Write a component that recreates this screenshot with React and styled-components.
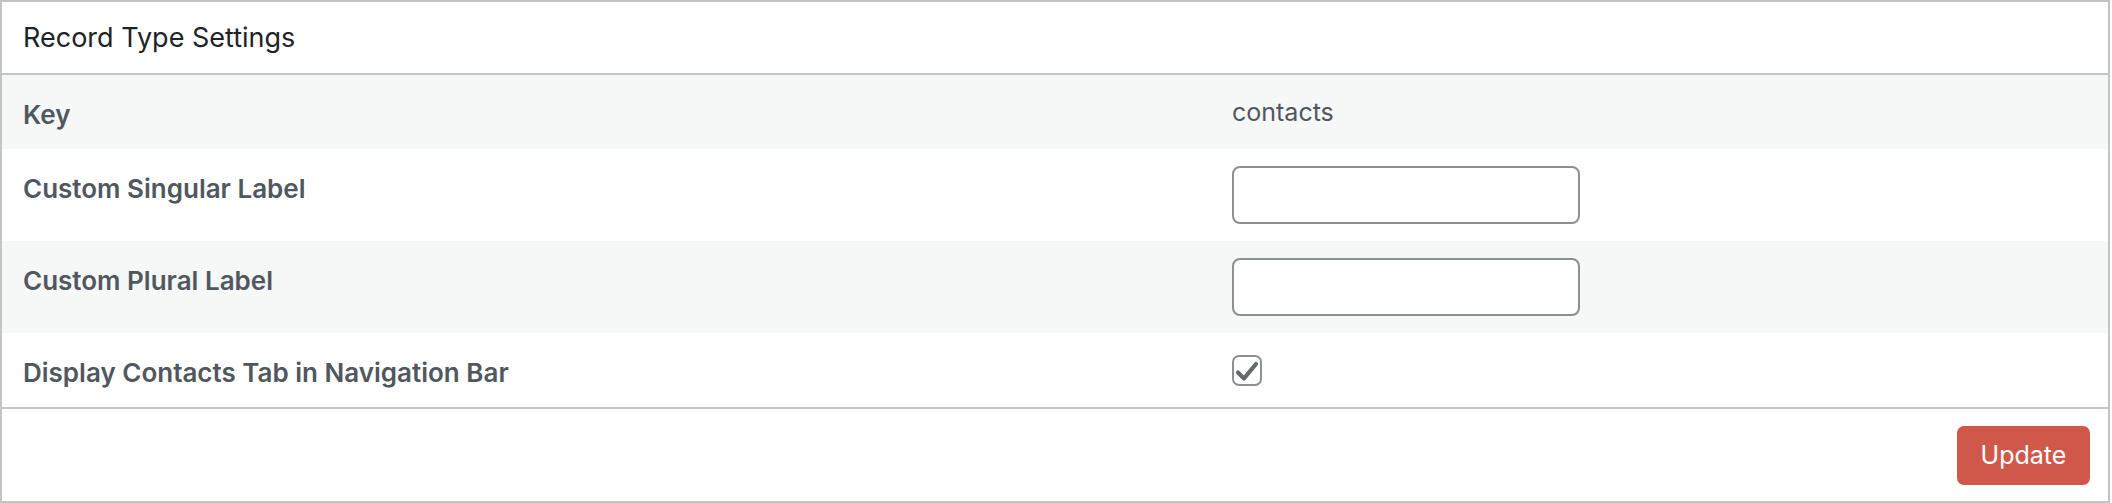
import React from 'react';
import styled, { createGlobalStyle } from 'styled-components';

const GlobalStyle = createGlobalStyle`
    body {
        margin: 0;
        background: #ffffff;
        font-family: Inter, "Noto Sans", "Liberation Sans", sans-serif;
    }
`;

const rows = [
    { label: 'Key', kind: 'text', value: 'contacts' },
    { label: 'Custom Singular Label', kind: 'input' },
    { label: 'Custom Plural Label', kind: 'input' },
    { label: 'Display Contacts Tab in Navigation Bar', kind: 'checkbox' },
];

function CheckIcon() {
    return (
        <svg width='26' height='26' viewBox='0 0 26 26'>
            <path
                d='M4 14.5 L10 20.5 L22 6'
                fill='none'
                stroke='#646970'
                strokeWidth='4.2'
                strokeLinecap='round'
                strokeLinejoin='round'
            />
        </svg>
    );
}

function App() {
    return (
        <>
            <GlobalStyle />
            <Box>
                <Header>Record Type Settings</Header>
                <Table>
                    {rows.map((r, i) => (
                        <Row key={i} striped={i % 2 === 0}>
                            <Label>{r.label}</Label>
                            {r.kind === 'text' && <ValueText>{r.value}</ValueText>}
                            {r.kind === 'input' && (
                                <InputCell>
                                    <TextInput type='text' />
                                </InputCell>
                            )}
                            {r.kind === 'checkbox' && (
                                <CheckCell>
                                    <Checkbox>
                                        <CheckIcon />
                                    </Checkbox>
                                </CheckCell>
                            )}
                        </Row>
                    ))}
                </Table>
                <Footer>
                    <UpdateButton>Update</UpdateButton>
                </Footer>
            </Box>
        </>
    );
}

export default App;

const Box = styled.div`
    width: 2110px;
    box-sizing: border-box;
    border: 2px solid #c3c4c7;
    background: #ffffff;
`;

const Header = styled.div`
    height: 73px;
    box-sizing: border-box;
    padding: 0 21px;
    display: flex;
    align-items: center;
    font-size: 27px;
    color: #1d2327;
    border-bottom: 2px solid #c3c4c7;
`;

const Table = styled.div`
    display: flex;
    flex-direction: column;
`;

const Row = styled.div`
    display: grid;
    grid-template-columns: 1209px 1fr;
    align-items: start;
    padding-left: 21px;
    background: ${(props) => (props.striped ? '#f6f7f7' : '#ffffff')};
`;

const Label = styled.div`
    padding: 23px 0 17px;
    font-size: 26px;
    line-height: 34px;
    font-weight: 600;
    color: #50575e;
`;

const ValueText = styled.div`
    padding: 20px 0 18px;
    font-size: 25px;
    line-height: 34px;
    color: #50575e;
`;

const InputCell = styled.div`
    padding: 17px 0;
`;

const TextInput = styled.input`
    display: block;
    width: 348px;
    height: 58px;
    box-sizing: border-box;
    border: 2px solid #8c8f94;
    border-radius: 8px;
    background: #ffffff;
    outline: none;
`;

const CheckCell = styled.div`
    padding: 22px 0 21px;
`;

const Checkbox = styled.div`
    width: 30px;
    height: 31px;
    box-sizing: border-box;
    border: 2px solid #8c8f94;
    border-radius: 7px;
    background: #ffffff;
    display: flex;
    align-items: center;
    justify-content: center;
`;

const Footer = styled.div`
    height: 94px;
    box-sizing: border-box;
    border-top: 2px solid #c3c4c7;
    display: flex;
    align-items: center;
    justify-content: flex-end;
    padding: 0 18px;
`;

const UpdateButton = styled.button`
    height: 59px;
    padding: 0 23px;
    min-width: 133px;
    border: none;
    border-radius: 7px;
    background: #d0584b;
    color: #ffffff;
    font-family: Inter, "Noto Sans", "Liberation Sans", sans-serif;
    font-size: 25px;
    cursor: pointer;
`;
